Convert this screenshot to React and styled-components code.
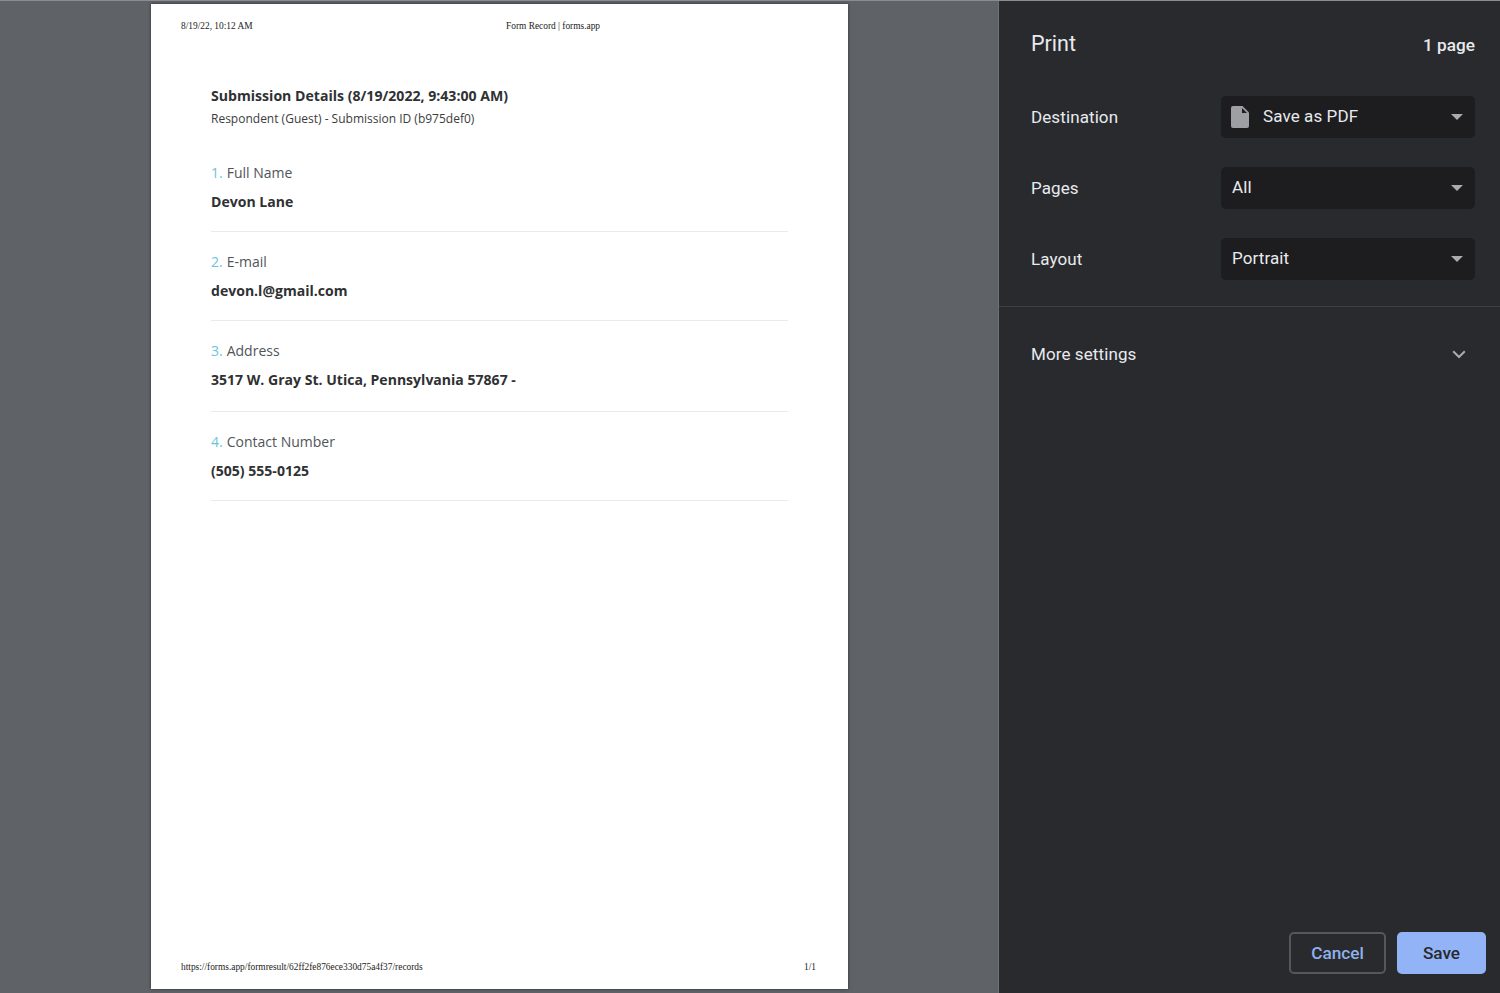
import React from 'react'
import styled, { createGlobalStyle } from 'styled-components'

const GlobalStyle = createGlobalStyle`
html, body {
    margin: 0;
    padding: 0;
    background: #5f6368;
}
* {
    box-sizing: border-box;
}
`

const Container = styled.div`
width: 1500px;
height: 993px;
display: flex;
overflow: hidden;
border-top: 1px solid #8a8c8f;
`

const Preview = styled.div`
width: 999px;
height: 100%;
padding: 3px 0 0 151px;
background-color: #5f6368;
border-right: 1px solid #6d7074;
`

const Sheet = styled.div`
width: 697px;
height: 985px;
background-color: #fff;
box-shadow: 0 0 3px rgba(0, 0, 0, 0.55);
display: flex;
flex-direction: column;
`

const PageMeta = styled.div`
height: ${props => props.$height}px;
padding: ${props => props.$top}px 32px 0 30px;
display: flex;
font-family: "Liberation Serif", serif;
font-size: 9.4px;
line-height: 12px;
color: #222;
`

const MetaLeft = styled.div`
width: ${props => props.$width}px;
flex-shrink: 0;
`

const MetaRight = styled.div`
margin-left: auto;
`

const Record = styled.div`
flex: 1;
padding: 0 60px;
font-family: "Open Sans", sans-serif;
color: #333;
`

const RecordTitle = styled.div`
font-size: 14.1px;
line-height: 20px;
font-weight: 700;
color: #2f3133;
`

const RecordSub = styled.div`
margin-top: 4px;
margin-bottom: 24px;
font-size: 12px;
line-height: 18px;
color: #3a3c3e;
`

const Field = styled.div`
height: ${props => props.$height}px;
padding-top: 12px;
border-bottom: 1px solid #e9eaeb;
margin-bottom: 8px;

${RecordSub} + & {
    padding-top: 11px;
}
`

const Question = styled.div`
font-size: 14px;
line-height: 20px;
color: #50555a;
`

const Index = styled.span`
color: #6cc4da;
margin-right: 4px;
`

const Answer = styled.div`
margin-top: 9px;
font-size: 14.05px;
line-height: 20px;
font-weight: 700;
color: #2f3133;
`

const Panel = styled.div`
flex: 1;
height: 100%;
background-color: #292a2d;
display: flex;
flex-direction: column;
font-family: Roboto, "Liberation Sans", sans-serif;
color: #e8eaed;
`

const PanelHeader = styled.div`
height: 95px;
padding: 28px 25px 0 32px;
display: flex;
justify-content: space-between;
align-items: flex-start;
`

const PanelTitle = styled.div`
font-size: 21.5px;
line-height: 30px;
`

const PageCount = styled.div`
font-size: 17.2px;
line-height: 30px;
font-weight: 500;
margin-top: 1px;
`

const SettingRow = styled.div`
height: 42px;
margin-bottom: 29px;
padding: 0 25px 0 32px;
display: flex;
align-items: center;
justify-content: space-between;
`

const SettingLabel = styled.div`
font-size: 17px;
letter-spacing: 0.1px;
`

const Select = styled.div`
width: 254px;
height: 42px;
padding: 0 11px 2px;
border-radius: 5px;
background-color: #1d1d1f;
display: flex;
align-items: center;
font-size: 17px;
color: #e8eaed;
`

const SelectIcon = styled.svg`
margin-left: -1px;
margin-top: 2px;
flex-shrink: 0;
`

const SelectValue = styled.span`
flex: 1;
margin-left: ${props => (props.$hasIcon ? '14px' : '0')};
letter-spacing: 0.1px;
`

const Caret = styled.span`
width: 0;
height: 0;
margin-top: 1px;
margin-right: 1px;
border-left: 6.5px solid transparent;
border-right: 6.5px solid transparent;
border-top: 6.5px solid #a9abae;
`

const Divider = styled.div`
height: 1px;
margin-top: -3px;
background-color: #3f4043;
`

const MoreRow = styled.div`
height: 94px;
padding: 0 34px 0 32px;
display: flex;
align-items: center;
justify-content: space-between;
font-size: 17px;
letter-spacing: 0.1px;
`

const Footer = styled.div`
margin-top: auto;
padding: 0 14px 19px 0;
display: flex;
justify-content: flex-end;
gap: 11px;
`

const Button = styled.div`
width: ${props => props.$width}px;
height: 42px;
border-radius: 5px;
display: flex;
align-items: center;
justify-content: center;
font-size: 17.2px;
font-weight: 500;
background-color: ${props => (props.$primary ? '#92b4f6' : 'transparent')};
color: ${props => (props.$primary ? '#28292c' : '#8fb2ec')};
border: ${props => (props.$primary ? 'none' : '2px solid #55575a')};
`

const FileIcon = () => (
    <SelectIcon width="18" height="22" viewBox="0 0 18 22">
        <path fill="#9d9fa2" d="M2 0h9.5L18 6.5V20a2 2 0 0 1-2 2H2a2 2 0 0 1-2-2V2a2 2 0 0 1 2-2z" />
        <path fill="#1d1d1f" d="M11 2v5h5z" />
    </SelectIcon>
)

const ChevronIcon = () => (
    <svg width="14" height="9" viewBox="0 0 14 9">
        <path fill="none" stroke="#a9abae" strokeWidth="2" d="M1.2 1.2L7 7l5.8-5.8" />
    </svg>
)

const fields = [
    { question: 'Full Name', answer: 'Devon Lane', height: 80 },
    { question: 'E-mail', answer: 'devon.l@gmail.com', height: 81 },
    { question: 'Address', answer: '3517 W. Gray St. Utica, Pennsylvania 57867 -', height: 83 },
    { question: 'Contact Number', answer: '(505) 555-0125', height: 81 },
]

const App = () => {
    return (
        <Container>
            <GlobalStyle />
            <Preview>
                <Sheet>
                    <PageMeta $height={82} $top={16}>
                        <MetaLeft $width={325}>8/19/22, 10:12 AM</MetaLeft>
                        <div>Form Record | forms.app</div>
                    </PageMeta>
                    <Record>
                        <RecordTitle>Submission Details (8/19/2022, 9:43:00 AM)</RecordTitle>
                        <RecordSub>Respondent (Guest) - Submission ID (b975def0)</RecordSub>
                        {fields.map((field, i) => (
                            <Field key={field.question} $height={field.height}>
                                <Question><Index>{i + 1}.</Index>{field.question}</Question>
                                <Answer>{field.answer}</Answer>
                            </Field>
                        ))}
                    </Record>
                    <PageMeta $height={33} $top={5}>
                        <div>https://forms.app/formresult/62ff2fe876ece330d75a4f37/records</div>
                        <MetaRight>1/1</MetaRight>
                    </PageMeta>
                </Sheet>
            </Preview>
            <Panel>
                <PanelHeader>
                    <PanelTitle>Print</PanelTitle>
                    <PageCount>1 page</PageCount>
                </PanelHeader>
                <SettingRow>
                    <SettingLabel>Destination</SettingLabel>
                    <Select>
                        <FileIcon />
                        <SelectValue $hasIcon>Save as PDF</SelectValue>
                        <Caret />
                    </Select>
                </SettingRow>
                <SettingRow>
                    <SettingLabel>Pages</SettingLabel>
                    <Select>
                        <SelectValue>All</SelectValue>
                        <Caret />
                    </Select>
                </SettingRow>
                <SettingRow>
                    <SettingLabel>Layout</SettingLabel>
                    <Select>
                        <SelectValue>Portrait</SelectValue>
                        <Caret />
                    </Select>
                </SettingRow>
                <Divider />
                <MoreRow>
                    More settings
                    <ChevronIcon />
                </MoreRow>
                <Footer>
                    <Button $width={97}>Cancel</Button>
                    <Button $width={89} $primary>Save</Button>
                </Footer>
            </Panel>
        </Container>
    )
}

export default App
